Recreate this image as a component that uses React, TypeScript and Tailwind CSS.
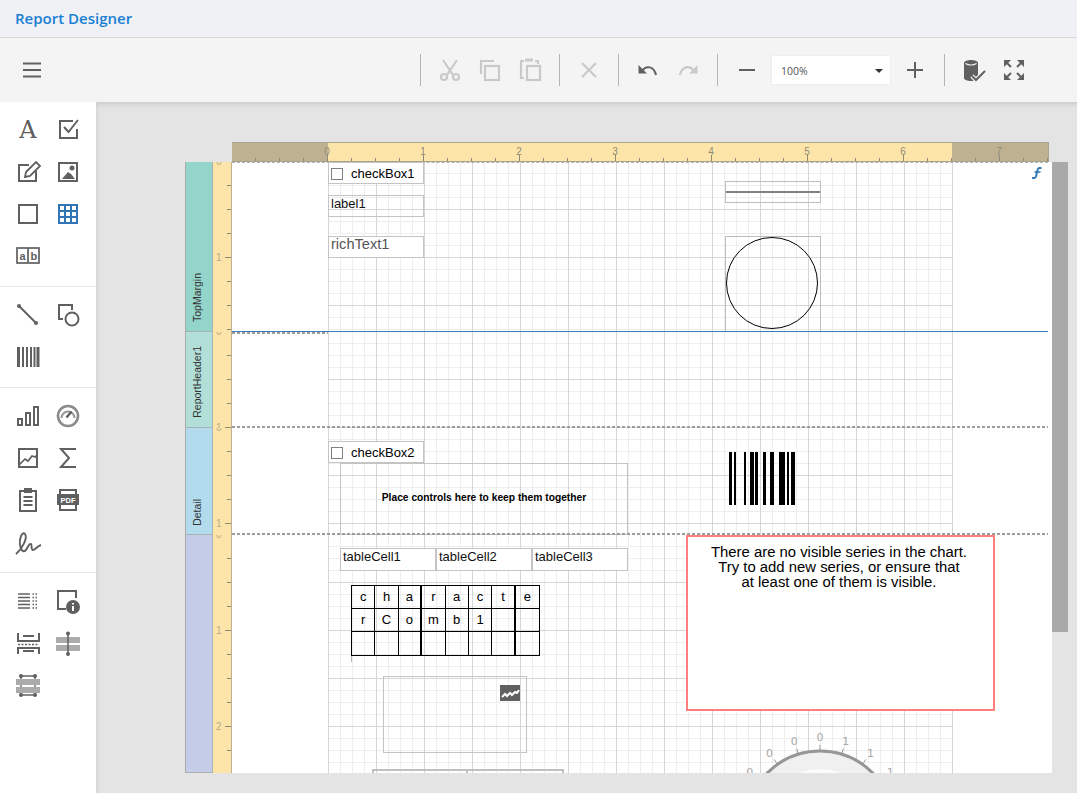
import type { ReactNode } from "react";

const DARK = "#606060";
const OFF = "#c9c9c9";

function Ico({ children, box = "w-8 h-8" }: { children: ReactNode; box?: string }) {
  return (
    <svg viewBox="0 0 32 32" className={box} fill="none">
      {children}
    </svg>
  );
}

function Sep() {
  return <div className="w-px h-[32px] bg-[#b5b5b5] mx-[9px] shrink-0" />;
}

function ToolBtn({ children }: { children: ReactNode }) {
  return <div className="w-10 h-10 flex items-center justify-center shrink-0">{children}</div>;
}

function Toolbar() {
  const s = { stroke: OFF, strokeWidth: 2.2 };
  return (
    <div className="h-[64px] shrink-0 bg-[#f4f4f4] flex items-center pl-[12px] pr-[43px]">
      <ToolBtn>
        <Ico>
          <path d="M7 9.500h18M7 16h18M7 22.500h18" stroke={DARK} strokeWidth="2" />
        </Ico>
      </ToolBtn>
      <div className="ml-auto flex items-center">
        <Sep />
        <ToolBtn>
          <Ico>
            <path d="M9 6l10 15M23 6L13 21" {...s} />
            <circle cx="10" cy="23" r="3" {...s} />
            <circle cx="22" cy="23" r="3" {...s} />
          </Ico>
        </ToolBtn>
        <ToolBtn>
          <Ico>
            <path d="M7 20V7h13" {...s} />
            <rect x="11" y="12" width="14" height="14" {...s} />
          </Ico>
        </ToolBtn>
        <ToolBtn>
          <Ico>
            <path d="M10 7H7v17h3M21 7h3v3" {...s} />
            <rect x="11" y="4.500" width="8" height="3" fill={OFF} />
            <rect x="13" y="12" width="13" height="14" {...s} />
          </Ico>
        </ToolBtn>
        <Sep />
        <ToolBtn>
          <Ico>
            <path d="M9 9l14 14M23 9L9 23" {...s} />
          </Ico>
        </ToolBtn>
        <Sep />
        <ToolBtn>
          <Ico>
            <path d="M10 17c4-6 12-5 14 4" stroke={DARK} strokeWidth="2" />
            <path d="M6.500 11v8.500h8.500z" fill={DARK} />
          </Ico>
        </ToolBtn>
        <ToolBtn>
          <Ico>
            <path d="M22 17c-4-6-12-5-14 4" {...s} />
            <path d="M25.500 11v8.500h-8.500z" fill={OFF} />
          </Ico>
        </ToolBtn>
        <Sep />
        <ToolBtn>
          <Ico>
            <path d="M8 16h16" stroke={DARK} strokeWidth="2" />
          </Ico>
        </ToolBtn>
        <div className="w-[120px] h-[30px] mx-[4px] bg-white border border-[#eeeeee] flex items-center justify-between pl-[9px] pr-[7px] font-['Open_Sans',sans-serif] text-[10.500px] text-[#555555]">
          <span className="mt-[3px]">100%</span>
          <span className="mt-[1px] w-0 h-0 border-x-[4px] border-x-transparent border-t-[4px] border-t-[#333333]" />
        </div>
        <ToolBtn>
          <Ico>
            <path d="M8 16h16M16 8v16" stroke={DARK} strokeWidth="2" />
          </Ico>
        </ToolBtn>
        <Sep />
        <ToolBtn>
          <Ico>
            <path d="M6 9c0-4 14-4 14 0v15c0 4-14 4-14 0z" fill={DARK} />
            <path d="M7.500 9.500c3 2 8 2 11 0" stroke="#f4f4f4" strokeWidth="1.200" />
            <path d="M14 22l4 4 9-9" stroke="#f4f4f4" strokeWidth="4.500" />
            <path d="M14 22l4 4 9-9" stroke={DARK} strokeWidth="2" />
          </Ico>
        </ToolBtn>
        <ToolBtn>
          <Ico>
            <path d="M6 6h7l-7 7zM26 6h-7l7 7zM6 26h7l-7-7zM26 26h-7l7-7z" fill={DARK} />
            <path d="M9 9l4 4M23 9l-4 4M9 23l4-4M23 23l-4-4" stroke={DARK} strokeWidth="2" />
          </Ico>
        </ToolBtn>
      </div>
    </div>
  );
}

const g = { stroke: DARK, strokeWidth: 2 };
const GREY = "#ababab";

const group1: ReactNode[] = [
  <span key="a" className="font-['DejaVu_Serif',serif] text-[24px] leading-none text-[#606060]">A</span>,
  <Ico key="c">
    <path d="M21 7H8v17h17V15" {...g} />
    <path d="M12 13l4.500 5L26 6" {...g} />
  </Ico>,
  <Ico key="e">
    <path d="M17 9H7v16h17V15" {...g} />
    <path d="M13 21l1-5 10-10 4 4-10 10z" {...g} strokeWidth="1.800" />
  </Ico>,
  <Ico key="p">
    <rect x="7" y="7" width="18" height="18" {...g} />
    <path d="M10 23l6-7 3 2 4 5z" fill={DARK} />
    <circle cx="20" cy="12" r="2.500" fill={DARK} />
  </Ico>,
  <Ico key="r">
    <rect x="7" y="7" width="18" height="18" {...g} />
  </Ico>,
  <Ico key="t">
    <rect x="6" y="6" width="20" height="20" fill="#2f75b5" />
    {[8, 14, 20].flatMap((x) =>
      [8, 14, 20].map((y) => <rect key={`${x}-${y}`} x={x} y={y} width="4" height="4" fill="white" />)
    )}
  </Ico>,
  <Ico key="ab">
    <rect x="5" y="8" width="22" height="15" {...g} strokeWidth="1.700" />
    <path d="M16 8v15" {...g} strokeWidth="1.700" />
    <text x="7.500" y="20" fontSize="11" fontWeight="700" fontFamily="Liberation Sans" fill={DARK}>a</text>
    <text x="18.500" y="20" fontSize="11" fontWeight="700" fontFamily="Liberation Sans" fill={DARK}>b</text>
  </Ico>,
];

const group2: ReactNode[] = [
  <Ico key="l">
    <path d="M7 7l17 17" {...g} />
    <circle cx="7" cy="7" r="2" fill={DARK} />
    <circle cx="24" cy="24" r="2" fill={DARK} />
  </Ico>,
  <Ico key="s">
    <path d="M20 11V6H7v14h4" {...g} />
    <circle cx="20" cy="20" r="6.500" {...g} />
  </Ico>,
  <Ico key="b">
    {[[5, 3], [10, 2], [14, 2], [18, 2], [21.500, 2], [24.500, 3]].map(([x, w]) => (
      <rect key={x} x={x} y="6" width={w} height="20" fill={DARK} />
    ))}
  </Ico>,
];

const group3: ReactNode[] = [
  <Ico key="ch">
    <rect x="6" y="19" width="4" height="6" {...g} />
    <rect x="14" y="13" width="4" height="12" {...g} />
    <rect x="22" y="7" width="4" height="18" {...g} />
  </Ico>,
  <Ico key="ga">
    <circle cx="16" cy="16" r="10" stroke="#8a8a8a" strokeWidth="2.600" />
    <path d="M9.500 18a6.500 6.500 0 0 1 13 0" stroke="#9a9a9a" strokeWidth="2.200" />
    <path d="M14.500 17.500l5-6" stroke={DARK} strokeWidth="2.400" />
  </Ico>,
  <Ico key="sp">
    <rect x="7" y="7" width="18" height="18" {...g} />
    <path d="M7 23l6-6 3 2 4-5 3 1 2-2" {...g} strokeWidth="1.700" />
  </Ico>,
  <Ico key="si">
    <path d="M24 7H9l8 9-8 9h15" {...g} />
  </Ico>,
  <Ico key="cl">
    <rect x="8" y="7" width="16" height="20" {...g} />
    <rect x="12" y="4" width="8" height="5" fill={DARK} />
    <path d="M11.500 13h9M11.500 17h9M11.500 21h9" {...g} />
  </Ico>,
  <Ico key="pd">
    <path d="M8 10V6h16v4M8 21v5h16v-5" {...g} />
    <rect x="5" y="10" width="22" height="11" fill={DARK} />
    <text x="16" y="18.500" textAnchor="middle" fontSize="7.500" fontWeight="700" fontFamily="Liberation Sans" fill="white">PDF</text>
  </Ico>,
  <Ico key="sg">
    <path d="M4 28c6-5 12-16 9-20-3-3-6 5-5 11 1 5 3 8 6 5 2-3 3-7 5-6 1 1 0 6 2 6 2 0 4-4 8-5" stroke={DARK} strokeWidth="1.900" />
  </Ico>,
];

const group4: ReactNode[] = [
  <Ico key="li">
    <path d="M6 9h12M6 12.500h12M6 16h12M6 19.500h12M6 23h12" stroke={DARK} strokeWidth="1.500" />
    <path d="M20.500 9h6M20.500 12.500h6M20.500 16h6M20.500 19.500h6M20.500 23h6" stroke={DARK} strokeWidth="1.500" strokeDasharray="1.500 1.500" />
  </Ico>,
  <Ico key="in">
    <path d="M24 13V6H6v18h8" {...g} />
    <circle cx="21" cy="22" r="7" fill={DARK} />
    <path d="M21 21v5M21 18v1.500" stroke="white" strokeWidth="2" />
  </Ico>,
  <Ico key="gh">
    <path d="M6 6v8h21V6M11 9h11" {...g} />
    <path d="M6 17.500h21" stroke={DARK} strokeWidth="1.500" strokeDasharray="2 1.500" />
    <path d="M6 27v-6h21v6M11 24h11" {...g} />
  </Ico>,
  <Ico key="sp2">
    <rect x="4" y="10" width="24" height="6" fill={GREY} />
    <rect x="4" y="18" width="24" height="6" fill={GREY} />
    <path d="M16 6v22" stroke={DARK} strokeWidth="1.500" />
    <circle cx="16" cy="6.500" r="2" fill={DARK} />
    <circle cx="16" cy="27" r="2" fill={DARK} />
  </Ico>,
  <Ico key="sp3">
    <path d="M9 7h14M9 26h14M9 7v19M23 7v19" stroke={DARK} strokeWidth="1.300" />
    <rect x="4" y="10" width="24" height="6" fill={GREY} />
    <rect x="4" y="18" width="24" height="6" fill={GREY} />
    <circle cx="9" cy="7" r="2" fill={DARK} />
    <circle cx="23" cy="7" r="2" fill={DARK} />
    <circle cx="9" cy="26" r="2" fill={DARK} />
    <circle cx="23" cy="26" r="2" fill={DARK} />
  </Ico>,
];

function SideGroup({ items, last }: { items: ReactNode[]; last?: boolean }) {
  return (
    <div className={`pt-[7px] pb-[9px] pl-[8px] grid grid-cols-[40px_40px] auto-rows-[42px] ${last ? "" : "border-b border-[#e6e6e6]"}`}>
      {items.map((item, i) => (
        <div key={i} className="flex items-center justify-center">
          {item}
        </div>
      ))}
    </div>
  );
}

function Sidebar() {
  return (
    <aside className="w-[96px] shrink-0 bg-white">
      <SideGroup items={group1} />
      <SideGroup items={group2} />
      <SideGroup items={group3} />
      <SideGroup items={group4} last />
    </aside>
  );
}

function TopTick({ major, label }: { major?: boolean; label?: string }) {
  return (
    <div className="w-[24px] shrink-0 h-full relative">
      <div className={`absolute right-0 bottom-0 w-px bg-[#8f8a78] ${major ? "h-[6px]" : "h-[3px]"}`} />
      {label && (
        <span className="absolute right-[-3px] top-[3px] w-[8px] text-center text-[10px] leading-[12px] text-[#8f8a78] font-['Liberation_Sans',sans-serif]">
          {label}
        </span>
      )}
    </div>
  );
}

function TopRuler() {
  const inner = Array.from({ length: 26 }, (_, i) => i);
  return (
    <div className="ml-[136px] w-[817px] h-[20px] flex border-t border-r border-b border-[#a8a28f]">
      <div className="flex bg-[#bdb192] w-[96px]">
        {[0, 1, 2, 3].map((i) => (
          <TopTick key={i} major={i === 3} label={i === 3 ? "0" : undefined} />
        ))}
      </div>
      <div className="flex bg-[#fde5a9] w-[624px]">
        {inner.map((i) => (
          <TopTick key={i} major={(i + 1) % 4 === 0} label={(i + 1) % 4 === 0 ? String((i + 1) / 4) : undefined} />
        ))}
      </div>
      <div className="flex bg-[#bdb192] flex-1">
        {[0, 1, 2, 3].map((i) => (
          <TopTick key={i} major={i === 1} label={i === 1 ? "7" : undefined} />
        ))}
      </div>
    </div>
  );
}

const bands = [
  { name: "TopMargin", h: "h-[170px]", px: 170, bg: "bg-[#93d5ca]", pad: "pb-[9px]" },
  { name: "ReportHeader1", h: "h-[96px]", px: 96, bg: "bg-[#b2e0d9]", pad: "pb-[9px]" },
  { name: "Detail", h: "h-[107px]", px: 107, bg: "bg-[#b2dcee]", pad: "pb-[8px]" },
  { name: "", h: "h-[238px]", px: 238, bg: "bg-[#c4cce8]", pad: "" },
];

function BandLabels() {
  return (
    <div className="w-[28px] shrink-0 flex flex-col border-l border-[#aaaaaa]">
      {bands.map((b) => (
        <div key={b.px} className={`${b.h} ${b.bg} ${b.pad} shrink-0 border-b border-r border-[#a9b2b2] flex flex-col items-center justify-end pr-[3px]`}>
          <span className="[writing-mode:vertical-rl] rotate-180 text-[10.500px] leading-none text-[#333333] font-['Liberation_Sans',sans-serif]">
            {b.name}
          </span>
        </div>
      ))}
    </div>
  );
}

function LeftRuler() {
  return (
    <div className="w-[19px] shrink-0 flex flex-col bg-[#fde5a9] border-r border-[#bdb192]">
      {bands.map((b) => (
        <div key={b.px} className={`${b.h} shrink-0 relative overflow-hidden`}>
          <span className="absolute left-[3px] top-[-5px] text-[10px] leading-[10px] text-[#b5a98a] font-['Liberation_Sans',sans-serif]">0</span>
          {Array.from({ length: Math.floor(b.px / 24) }, (_, i) => (
            <div key={i} className="h-[24px] relative">
              <div className={`absolute right-0 bottom-0 h-px bg-[#8f8a78] ${(i + 1) % 4 === 0 ? "w-[6px]" : "w-[4px]"}`} />
              {(i + 1) % 4 === 0 && (
                <span className="absolute left-[3px] bottom-[-5px] text-[10px] leading-[10px] text-[#b5a98a] font-['Liberation_Sans',sans-serif]">
                  {(i + 1) / 4}
                </span>
              )}
            </div>
          ))}
        </div>
      ))}
    </div>
  );
}

function BandRow({ h, line, children }: { h: string; line: string; children?: ReactNode }) {
  return (
    <div className={`${h} shrink-0 relative flex`}>
      <div className="w-[96px] shrink-0 bg-white" />
      <div className="w-[625px] shrink-0 border-r border-dashed border-[#d4d4d4] bg-white bg-[linear-gradient(90deg,#d6d6d6_1px,transparent_1px),linear-gradient(0deg,#d6d6d6_1px,transparent_1px),linear-gradient(90deg,#eeeeee_1px,transparent_1px),linear-gradient(0deg,#eeeeee_1px,transparent_1px)] bg-[size:48px_48px,48px_48px,12px_12px,12px_12px]" />
      <div className="flex-1 bg-white" />
      {children}
      <div className={`absolute left-0 bottom-0 w-[816px] ${line}`} />
    </div>
  );
}

const DASH = "h-[2px] bg-[repeating-linear-gradient(90deg,#9c9c9c_0_3px,transparent_3px_5px)]";

function CheckCtl({ top, label }: { top: string; label: string }) {
  return (
    <div className={`absolute left-[96px] ${top} w-[96px] h-[22px] pt-[1px] bg-white border border-[#c4c4c4] flex items-center text-[13px] text-black font-['Liberation_Sans',sans-serif]`}>
      <span className="w-[12px] h-[12px] ml-[2px] border border-[#808080] shrink-0" />
      <span className="ml-[8px] leading-none">{label}</span>
    </div>
  );
}

function Band1() {
  return (
    <BandRow h="h-[170px]" line="h-px bg-[#3f7cb8]">
      <div className="absolute left-0 top-0 w-[816px] border-t border-dashed border-[#b0b0b0]" />
      <CheckCtl top="top-0" label="checkBox1" />
      <div className="absolute left-[96px] top-[33px] w-[96px] h-[22px] border border-[#c4c4c4] pl-[2px] text-[13px] leading-[16px] text-[#111111] font-['Liberation_Sans',sans-serif]">
        label1
      </div>
      <div className="absolute left-[96px] top-[74px] w-[96px] h-[22px] bg-white border border-[#c4c4c4] pl-[2px] text-[14.600px] leading-[14px] text-[#555555] font-['Liberation_Sans',sans-serif]">
        richText1
      </div>
      <div className="absolute left-[493px] top-[19px] w-[96px] h-[22px] border border-[#bdbdbd] flex items-center">
        <div className="w-full h-[2px] bg-[#808080]" />
      </div>
      <div className="absolute left-[493px] top-[74px] w-[96px] h-[96px] border border-[#bdbdbd] flex items-center justify-start">
        <div className="w-[92px] h-[92px] rounded-full border border-black mt-[-2px]" />
      </div>
      <svg className="absolute left-[800px] top-[5px] w-[10px] h-[12px]" viewBox="0 0 10 12" fill="none">
        <path d="M9.500 1H7.500C6.500 1 6 1.500 5.700 2.500L4 9.500C3.700 10.500 3 11 2 11H0" stroke="#337ab7" strokeWidth="2" />
        <path d="M2.500 5h6" stroke="#337ab7" strokeWidth="1.600" />
      </svg>
    </BandRow>
  );
}

function Band2() {
  return (
    <BandRow h="h-[96px]" line={DASH}>
      <div className={`absolute left-0 top-0 w-[96px] ${DASH}`} />
    </BandRow>
  );
}

const barcode = [
  [0, 3], [5, 2], [15, 2], [21, 4], [26, 3], [34, 3], [41, 4], [50, 6], [58, 2], [62, 4],
];

function Band3() {
  return (
    <BandRow h="h-[107px]" line={DASH}>
      <CheckCtl top="top-[13px]" label="checkBox2" />
      <div className="absolute left-[108px] top-[35px] w-[288px] h-[72px] pb-[3px] border border-[#c4c4c4] flex items-center justify-center text-[10.250px] font-bold text-black font-['Liberation_Sans',sans-serif]">
        Place controls here to keep them together
      </div>
      <div className="absolute left-[497px] top-[24px] w-[67px] h-[53px] flex">
        {barcode.map(([x, w], i) => (
          <div key={i} className="h-full bg-black shrink-0" style={{ marginLeft: i === 0 ? 0 : x - barcode[i - 1][0] - barcode[i - 1][1], width: w }} />
        ))}
      </div>
    </BandRow>
  );
}

const comb = ["c", "h", "a", "r", "a", "c", "t", "e", "r", "C", "o", "m", "b", "1", "", "", "", "", "", "", "", "", "", ""];

function Gauge() {
  const ang = [-53, -35, -17, 0, 17, 35, 53];
  const labels = ["0", "0", "0", "0", "1", "1", "1"];
  return (
    <svg className="absolute left-[488px] top-[195px] w-[200px] h-[43px] overflow-hidden" viewBox="0 0 200 43">
      <circle cx="100" cy="95" r="74" fill="#f0f0f0" stroke="#969696" strokeWidth="3" />
      <circle cx="100" cy="95" r="56" fill="#fbfbfb" />
      {ang.map((a, i) => {
        const rad = (a * Math.PI) / 180;
        const sx = Math.sin(rad);
        const cy = Math.cos(rad);
        return (
          <g key={a}>
            <line x1={100 + 74 * sx} y1={95 - 74 * cy} x2={100 + 80 * sx} y2={95 - 80 * cy} stroke="#969696" strokeWidth="1" />
            <text x={100 + 88 * sx} y={95 - 88 * cy + 4} textAnchor="middle" fontSize="11" fontFamily="DejaVu Sans" fill="#a8a8a8">
              {labels[i]}
            </text>
          </g>
        );
      })}
    </svg>
  );
}

function Band4() {
  const cell = "border border-[#c4c4c4] bg-white pl-[2px] text-[13px] leading-[15px] text-[#111111] font-['Liberation_Sans',sans-serif]";
  return (
    <BandRow h="h-[238px]" line="">
      <div className="absolute left-[108px] top-[13px] w-[288px] h-[23px] grid grid-cols-3">
        <div className={cell}>tableCell1</div>
        <div className={cell}>tableCell2</div>
        <div className={cell}>tableCell3</div>
      </div>
      <div className="absolute left-[119px] top-[50px] w-[189px] h-[71px] grid grid-cols-8 grid-rows-3 border border-black text-[13px] text-black font-['Liberation_Sans',sans-serif]">
        {comb.map((c, i) => (
          <div
            key={i}
            className={`flex items-center justify-center ${i % 8 === 7 ? "" : i % 8 === 2 || i % 8 === 6 ? "border-r-2 border-black" : "border-r border-black"} ${i < 16 ? "border-b border-black" : ""}`}
          >
            {c}
          </div>
        ))}
      </div>
      <div className="absolute left-[119px] top-[121px] w-px h-[6px] bg-[#b5b5b5]" />
      <div className="absolute left-[151px] top-[141px] w-[144px] h-[77px] border border-[#c4c4c4]">
        <svg className="absolute left-[116px] top-[8px] w-[20px] h-[16px]" viewBox="0 0 20 16">
          <rect width="20" height="16" fill="#606060" />
          <path d="M2 12l3-3 2 2 3-3 2 2 3-3 2 1 2-3" stroke="white" strokeWidth="2" fill="none" />
        </svg>
      </div>
      <div className="absolute left-[140px] top-[234px] w-[192px] h-[10px] border-t-2 border-x-2 border-[#c0c0c0] grid grid-cols-2">
        <div className="border-r-2 border-[#c0c0c0]" />
      </div>
      <div className="absolute left-[454px] top-0 w-[309px] h-[176px] bg-white border-2 border-[#ff7f7f] pt-[8px] pr-[3px] text-center text-[14.870px] leading-[15px] text-black font-['Liberation_Sans',sans-serif]">
        <p>There are no visible series in the chart.</p>
        <p>Try to add new series, or ensure that</p>
        <p>at least one of them is visible.</p>
      </div>
      <Gauge />
    </BandRow>
  );
}

export default function App() {
  return (
    <div className="w-[1077px] h-[793px] flex flex-col overflow-hidden bg-[#e4e4e4] font-['Liberation_Sans',sans-serif]">
      <header className="h-[38px] shrink-0 bg-[#f0f1f5] border-b border-[#d9d9d9] flex items-center pl-[15px] font-['Open_Sans',sans-serif] font-semibold text-[15px] text-[#1a7fd4]">
        Report Designer
      </header>
      <Toolbar />
      <div className="flex-1 min-h-0 flex">
        <Sidebar />
        <main className="flex-1 min-w-0 pt-[40px] shadow-[inset_2px_4px_5px_-2px_rgba(0,0,0,0.12)]">
          <TopRuler />
          <div className="ml-[89px] flex h-[611px] overflow-hidden">
            <BandLabels />
            <LeftRuler />
            <div className="w-[820px] shrink-0 flex flex-col overflow-hidden">
              <Band1 />
              <Band2 />
              <Band3 />
              <Band4 />
            </div>
            <div className="w-[16px] h-[470px] shrink-0 bg-[#a9a9a9]" />
          </div>
        </main>
      </div>
    </div>
  );
}
